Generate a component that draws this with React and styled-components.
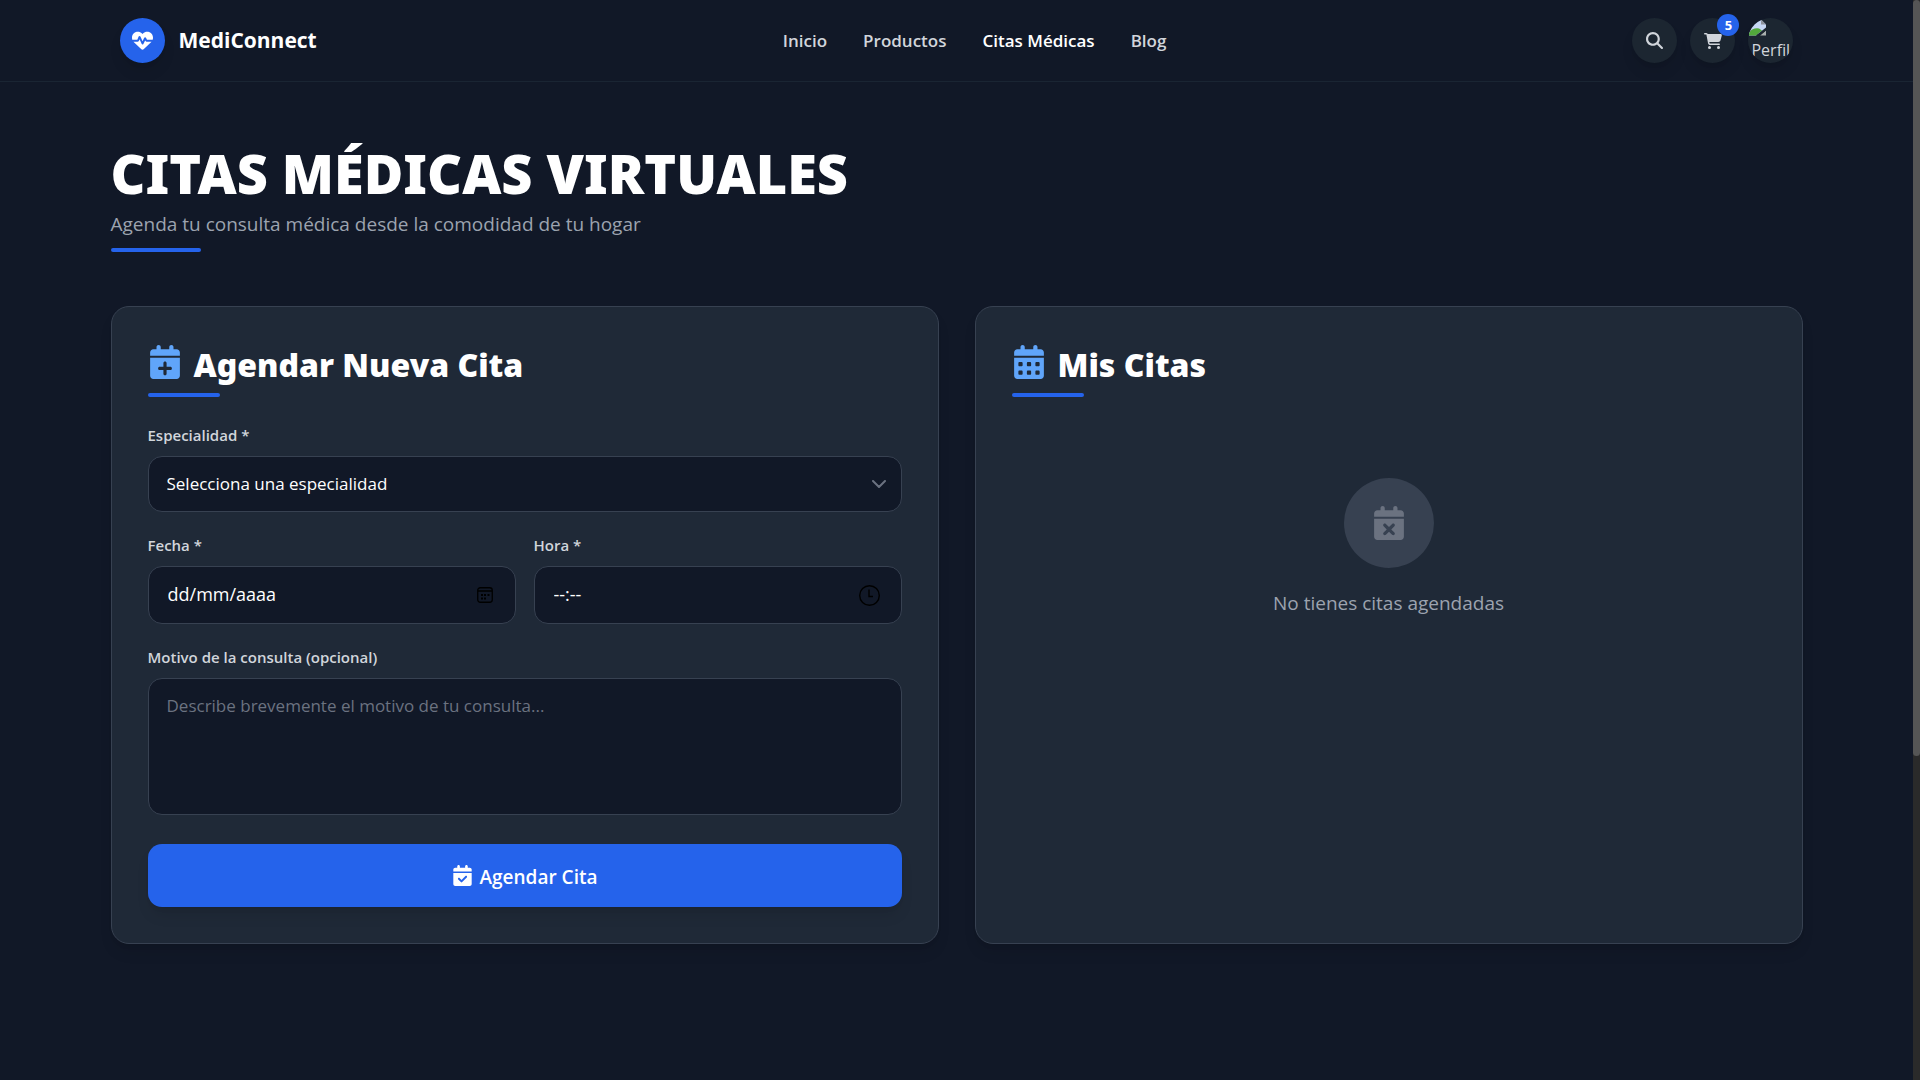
import React, { useState } from "react"
import styled, { createGlobalStyle } from "styled-components"
import {
  FaHeartPulse,
  FaMagnifyingGlass,
  FaCartShopping,
  FaCalendarPlus,
  FaCalendarDays,
  FaCalendarCheck,
  FaCalendarXmark
} from "react-icons/fa6"

const GlobalStyle = createGlobalStyle`
  *, *::before, *::after {
    box-sizing: border-box;
  }

  body {
    margin: 0;
    color: white;
    background: #111827;
    font-family: "Open Sans", "Noto Sans", sans-serif;
    font-size: 17px;
    line-height: 27px;
  }

  button, input, select, textarea {
    font: inherit;
    color: inherit;
  }

  h1, h2, p {
    margin: 0;
  }
`

const Shell = styled.div`
  display: grid;
  grid-template-columns: minmax(0, 1fr) 7px;
  min-height: 100vh;
`

const ScrollTrack = styled.div`
  position: sticky;
  top: 0;
  height: 100vh;
  background: #2a2a2a;
`

const ScrollThumb = styled.div`
  height: 70%;
  border-radius: 4px;
  background: #555;
`

const Header = (function() {
  const Bar = styled.header`
    border-bottom: 1px solid #1a2533;
  `

  const Inner = styled.div`
    display: flex;
    align-items: center;
    justify-content: space-between;
    max-width: 1728px;
    margin: 0 auto;
    padding: 18px 27px;
  `

  const Brand = styled.a`
    display: flex;
    align-items: center;
    gap: 14px;
    color: white;
    font-size: 21px;
    font-weight: 700;
    text-decoration: none;
  `

  const Logo = styled.span`
    display: grid;
    place-items: center;
    width: 45px;
    height: 45px;
    border-radius: 50%;
    background: #2563eb;
    box-shadow: 0 10px 15px -3px rgba(0, 0, 0, 0.1), 0 4px 6px -4px rgba(0, 0, 0, 0.1);
  `

  const Nav = styled.nav`
    display: flex;
    gap: 36px;
  `

  const NavLink = styled.a`
    color: ${prop => prop.$active ? 'white' : '#d1d5db'};
    font-size: 17px;
    font-weight: 600;
    text-decoration: none;
  `

  const Actions = styled.div`
    display: flex;
    gap: 13px;
  `

  const RoundButton = styled.button`
    position: relative;
    display: grid;
    place-items: center;
    width: 45px;
    height: 45px;
    padding: 0;
    border: 0;
    border-radius: 50%;
    color: #d1d5db;
    background: #1c2631;
    box-shadow: 0 10px 15px -3px rgba(0, 0, 0, 0.1), 0 4px 6px -4px rgba(0, 0, 0, 0.1);
    cursor: pointer;
  `

  const Badge = styled.span`
    position: absolute;
    top: -4px;
    right: -4px;
    width: 22px;
    height: 22px;
    border-radius: 50%;
    color: white;
    background: #2563eb;
    font-size: 13px;
    font-weight: 700;
    line-height: 22px;
    text-align: center;
  `

  const Avatar = styled(RoundButton)`
    place-content: start;
    place-items: start;
    padding-top: 1px;
    overflow: hidden;
    font-size: 16px;
    line-height: 28px;
  `

  const AvatarText = styled.span`
    padding-left: 3px;
  `

  const Missing = () => (
    <svg width="18" height="17" viewBox="0 0 18 16" aria-hidden="true">
      <path d="M1 0h12l5 5v5L8 16H1z" fill="#c6d7f5" />
      <path d="M13 0l5 5h-5z" fill="#8d929c" />
      <path d="M1 16v-3q4-5 10-4l3 2-6 5z" fill="#52a83c" />
      <path d="M12 16l6-5v5z" fill="#a9b0ae" />
      <path d="M8 16l10-8v3l-6 5z" fill="#1c2631" />
    </svg>
  )

  return () => (
    <Bar>
      <Inner>
        <Brand href="#">
          <Logo><FaHeartPulse size={21} /></Logo>
          MediConnect
        </Brand>
        <Nav>
          <NavLink href="#">Inicio</NavLink>
          <NavLink href="#">Productos</NavLink>
          <NavLink href="#" $active>Citas Médicas</NavLink>
          <NavLink href="#">Blog</NavLink>
        </Nav>
        <Actions>
          <RoundButton type="button" aria-label="Buscar"><FaMagnifyingGlass size={17} /></RoundButton>
          <RoundButton type="button" aria-label="Carrito">
            <FaCartShopping size={18} />
            <Badge>5</Badge>
          </RoundButton>
          <Avatar type="button">
            <Missing />
            <AvatarText>Perfil</AvatarText>
          </Avatar>
        </Actions>
      </Inner>
    </Bar>
  )
})()

const Main = styled.main`
  max-width: 1728px;
  margin: 0 auto;
  padding: 54px 18px;
`

const Heading = styled.div`
  margin-bottom: 54px;
`

const Title = styled.h1`
  font-family: "Noto Sans", "Open Sans", sans-serif;
  font-size: 54px;
  font-weight: 900;
  line-height: 74px;
`

const Subtitle = styled.p`
  color: #9ca3af;
  font-size: 19px;
  line-height: 28px;
`

const Underline = styled.div`
  width: ${prop => prop.$width}px;
  height: 4px;
  margin-top: ${prop => prop.$gap}px;
  border-radius: 2px;
  background: #2563eb;
`

const Columns = styled.div`
  display: grid;
  grid-template-columns: 1fr 1fr;
  gap: 36px;
`

const Card = styled.section`
  padding: 36px;
  border: 1px solid #374151;
  border-radius: 18px;
  background: #1f2937;
  box-shadow: 0 10px 15px -3px rgba(0, 0, 0, 0.1), 0 4px 6px -4px rgba(0, 0, 0, 0.1);
`

const CardTitle = styled.h2`
  display: flex;
  align-items: flex-start;
  gap: 12px;
  font-family: "Noto Sans", "Open Sans", sans-serif;
  font-size: 32px;
  font-weight: 900;
  line-height: 44px;

  svg {
    margin-top: 2px;
    color: #60a5fa;
  }
`

const AppointmentForm = (function() {
  const Form = styled.form`
    display: grid;
    gap: 22px;
    margin-top: 27px;
  `

  const Row = styled.div`
    display: grid;
    grid-template-columns: 1fr 1fr;
    gap: 18px;
  `

  const Field = styled.div`
    display: grid;
    gap: 9px;
  `

  const Label = styled.label`
    color: #d1d5db;
    font-size: 15px;
    font-weight: 600;
    line-height: 23px;
  `

  const Control = styled.div`
    display: grid;
    align-items: center;

    > * {
      grid-area: 1 / 1;
    }

    > svg {
      justify-self: end;
      margin-right: ${prop => prop.$inset}px;
      pointer-events: none;
    }
  `

  const Select = styled.select`
    width: 100%;
    height: 56px;
    padding: 0 18px 2px;
    appearance: none;
    border: 1px solid #374151;
    border-radius: 14px;
    background: #111827;
  `

  const Input = styled.input`
    width: 100%;
    height: 58px;
    padding: 0 19px 2px;
    border: 1px solid #374151;
    border-radius: 14px;
    background: #111827;
    font-size: 18px;

    &::placeholder {
      color: white;
      opacity: 1;
    }
  `

  const Textarea = styled.textarea`
    display: block;
    width: 100%;
    height: 137px;
    padding: 13px 18px;
    border: 1px solid #374151;
    border-radius: 14px;
    background: #111827;
    resize: none;

    &::placeholder {
      color: #6b7280;
      opacity: 1;
    }
  `

  const Submit = styled.button`
    display: flex;
    align-items: center;
    justify-content: center;
    gap: 7px;
    height: 63px;
    margin-top: 7px;
    padding: 4px 0 0;
    border: 0;
    border-radius: 14px;
    background: #2563eb;
    box-shadow: 0 10px 15px -3px rgba(0, 0, 0, 0.1), 0 4px 6px -4px rgba(0, 0, 0, 0.1);
    font-size: 19px;
    font-weight: 600;
    cursor: pointer;

    svg {
      margin-bottom: 4px;
    }
  `

  const Chevron = () => (
    <svg width="14" height="8" viewBox="0 0 14 8" fill="none" stroke="#6b7280" strokeWidth="2" strokeLinecap="round" strokeLinejoin="round">
      <path d="M1 1l6 6 6-6" />
    </svg>
  )

  const DateIcon = () => (
    <svg width="16" height="16" viewBox="0 0 16 16" fill="none" stroke="black">
      <rect x="0.75" y="0.75" width="14.5" height="14.5" rx="2.5" strokeWidth="1.3" />
      <path d="M1 4h14" strokeWidth="1.5" />
      <path d="M4 8h2M7 8h2M10.500 8h2M4 11.500h2M7 11.500h2" strokeWidth="2" />
    </svg>
  )

  const TimeIcon = () => (
    <svg width="21" height="21" viewBox="0 0 21 21" fill="none" stroke="black" strokeWidth="1.4">
      <circle cx="10.5" cy="10.5" r="9.8" />
      <path d="M10 4.500v7h4" />
    </svg>
  )

  return () => {
    const [form, setForm] = useState({ specialty: "", date: "", time: "", reason: "" })
    const update = key => e => setForm({ ...form, [key]: e.target.value })

    return (
      <Form onSubmit={e => e.preventDefault()}>
        <Field>
          <Label htmlFor="specialty">Especialidad *</Label>
          <Control $inset={16}>
            <Select id="specialty" value={form.specialty} onChange={update("specialty")}>
              <option value="">Selecciona una especialidad</option>
            </Select>
            <Chevron />
          </Control>
        </Field>
        <Row>
          <Field>
            <Label htmlFor="date">Fecha *</Label>
            <Control $inset={23}>
              <Input id="date" placeholder="dd/mm/aaaa" value={form.date} onChange={update("date")} />
              <DateIcon />
            </Control>
          </Field>
          <Field>
            <Label htmlFor="time">Hora *</Label>
            <Control $inset={22}>
              <Input id="time" placeholder="--:--" value={form.time} onChange={update("time")} />
              <TimeIcon />
            </Control>
          </Field>
        </Row>
        <Field>
          <Label htmlFor="reason">Motivo de la consulta (opcional)</Label>
          <Textarea
            id="reason"
            placeholder="Describe brevemente el motivo de tu consulta..."
            value={form.reason}
            onChange={update("reason")}
          />
        </Field>
        <Submit type="submit">
          <FaCalendarCheck size={21} />
          Agendar Cita
        </Submit>
      </Form>
    )
  }
})()

const EmptyList = (function() {
  const Empty = styled.div`
    display: flex;
    flex-direction: column;
    align-items: center;
    gap: 19px;
    padding-top: 81px;
    color: #9ca3af;
    font-size: 19px;
    line-height: 32px;
  `

  const Circle = styled.div`
    display: grid;
    place-items: center;
    width: 90px;
    height: 90px;
    border-radius: 50%;
    color: #6b7280;
    background: #374151;
  `

  return () => (
    <Empty>
      <Circle><FaCalendarXmark size={34} /></Circle>
      <p>No tienes citas agendadas</p>
    </Empty>
  )
})()

const App = () => (
  <Shell>
    <GlobalStyle />
    <div>
      <Header />
      <Main>
        <Heading>
          <Title>CITAS MÉDICAS VIRTUALES</Title>
          <Subtitle>Agenda tu consulta médica desde la comodidad de tu hogar</Subtitle>
          <Underline $width={90} $gap={10} />
        </Heading>
        <Columns>
          <Card>
            <CardTitle><FaCalendarPlus size={34} />Agendar Nueva Cita</CardTitle>
            <Underline $width={72} $gap={6} />
            <AppointmentForm />
          </Card>
          <Card>
            <CardTitle><FaCalendarDays size={34} />Mis Citas</CardTitle>
            <Underline $width={72} $gap={6} />
            <EmptyList />
          </Card>
        </Columns>
      </Main>
    </div>
    <ScrollTrack>
      <ScrollThumb />
    </ScrollTrack>
  </Shell>
)

export default App
